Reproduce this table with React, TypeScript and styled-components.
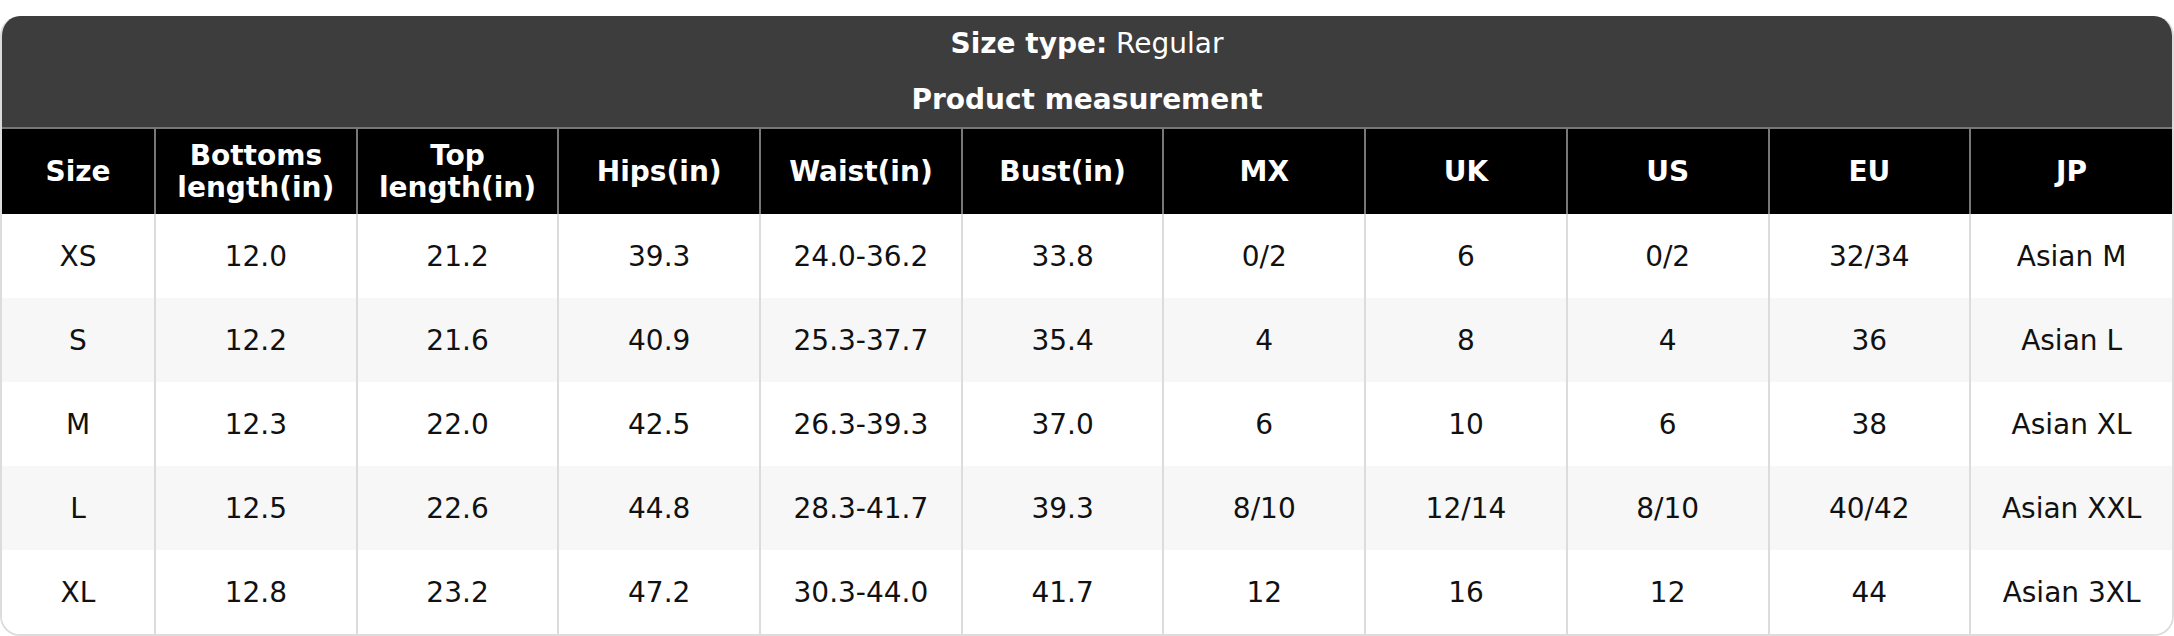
import styled, { createGlobalStyle } from "styled-components";

const GlobalStyle = createGlobalStyle`
  html, body {
    margin: 0;
    padding: 0;
    background: #fff;
  }
  body {
    font-family: "DejaVu Sans", "Liberation Sans", sans-serif;
  }
`;

const Page = styled.div`
  padding-top: 16px;
`;

const Card = styled.div`
  border: 2px solid #dcdcdc;
  border-top: none;
  border-radius: 20px;
  overflow: hidden;
  background: #fff;
`;

const TitleBar = styled.div`
  background: #3d3d3d;
  color: #fff;
  text-align: center;
  font-size: 28px;
`;

const TitleLine = styled.div<{ $bold?: boolean; $h: number }>`
  height: ${(p) => p.$h}px;
  line-height: ${(p) => p.$h}px;
  font-weight: ${(p) => (p.$bold ? 700 : 400)};

  b {
    font-weight: 700;
  }
`;

const Table = styled.table`
  width: 100%;
  border-collapse: collapse;
  table-layout: fixed;
  font-size: 28px;
`;

const HeadCell = styled.th`
  background: #000;
  color: #fff;
  font-weight: 700;
  height: 85px;
  padding: 0 4px;
  line-height: 32px;
  text-align: center;
  border-top: 2px solid #777;
  border-left: 2px solid #777;

  &:first-child {
    border-left: none;
  }
`;

const Row = styled.tr<{ $shade?: boolean }>`
  background: ${(p) => (p.$shade ? "#f7f7f7" : "#fff")};
`;

const Cell = styled.td`
  height: 84px;
  padding: 0 4px;
  text-align: center;
  color: #111;
  border-left: 2px solid #dcdcdc;

  &:first-child {
    border-left: none;
  }
`;

const headers = [
  "Size",
  "Bottoms length(in)",
  "Top length(in)",
  "Hips(in)",
  "Waist(in)",
  "Bust(in)",
  "MX",
  "UK",
  "US",
  "EU",
  "JP",
];

const rows = [
  ["XS", "12.0", "21.2", "39.3", "24.0-36.2", "33.8", "0/2", "6", "0/2", "32/34", "Asian M"],
  ["S", "12.2", "21.6", "40.9", "25.3-37.7", "35.4", "4", "8", "4", "36", "Asian L"],
  ["M", "12.3", "22.0", "42.5", "26.3-39.3", "37.0", "6", "10", "6", "38", "Asian XL"],
  ["L", "12.5", "22.6", "44.8", "28.3-41.7", "39.3", "8/10", "12/14", "8/10", "40/42", "Asian XXL"],
  ["XL", "12.8", "23.2", "47.2", "30.3-44.0", "41.7", "12", "16", "12", "44", "Asian 3XL"],
];

export default function App() {
  return (
    <Page>
      <GlobalStyle />
      <Card>
        <TitleBar>
          <TitleLine $h={56}>
            <b>Size type:</b> Regular
          </TitleLine>
          <TitleLine $h={55} $bold>
            Product measurement
          </TitleLine>
        </TitleBar>
        <Table>
          <colgroup>
            <col style={{ width: 153 }} />
            {headers.slice(1).map((h) => (
              <col key={h} />
            ))}
          </colgroup>
          <thead>
            <tr>
              {headers.map((h) => (
                <HeadCell key={h}>{h}</HeadCell>
              ))}
            </tr>
          </thead>
          <tbody>
            {rows.map((r, i) => (
              <Row key={r[0]} $shade={i % 2 === 1}>
                {r.map((v, j) => (
                  <Cell key={j}>{v}</Cell>
                ))}
              </Row>
            ))}
          </tbody>
        </Table>
      </Card>
    </Page>
  );
}
